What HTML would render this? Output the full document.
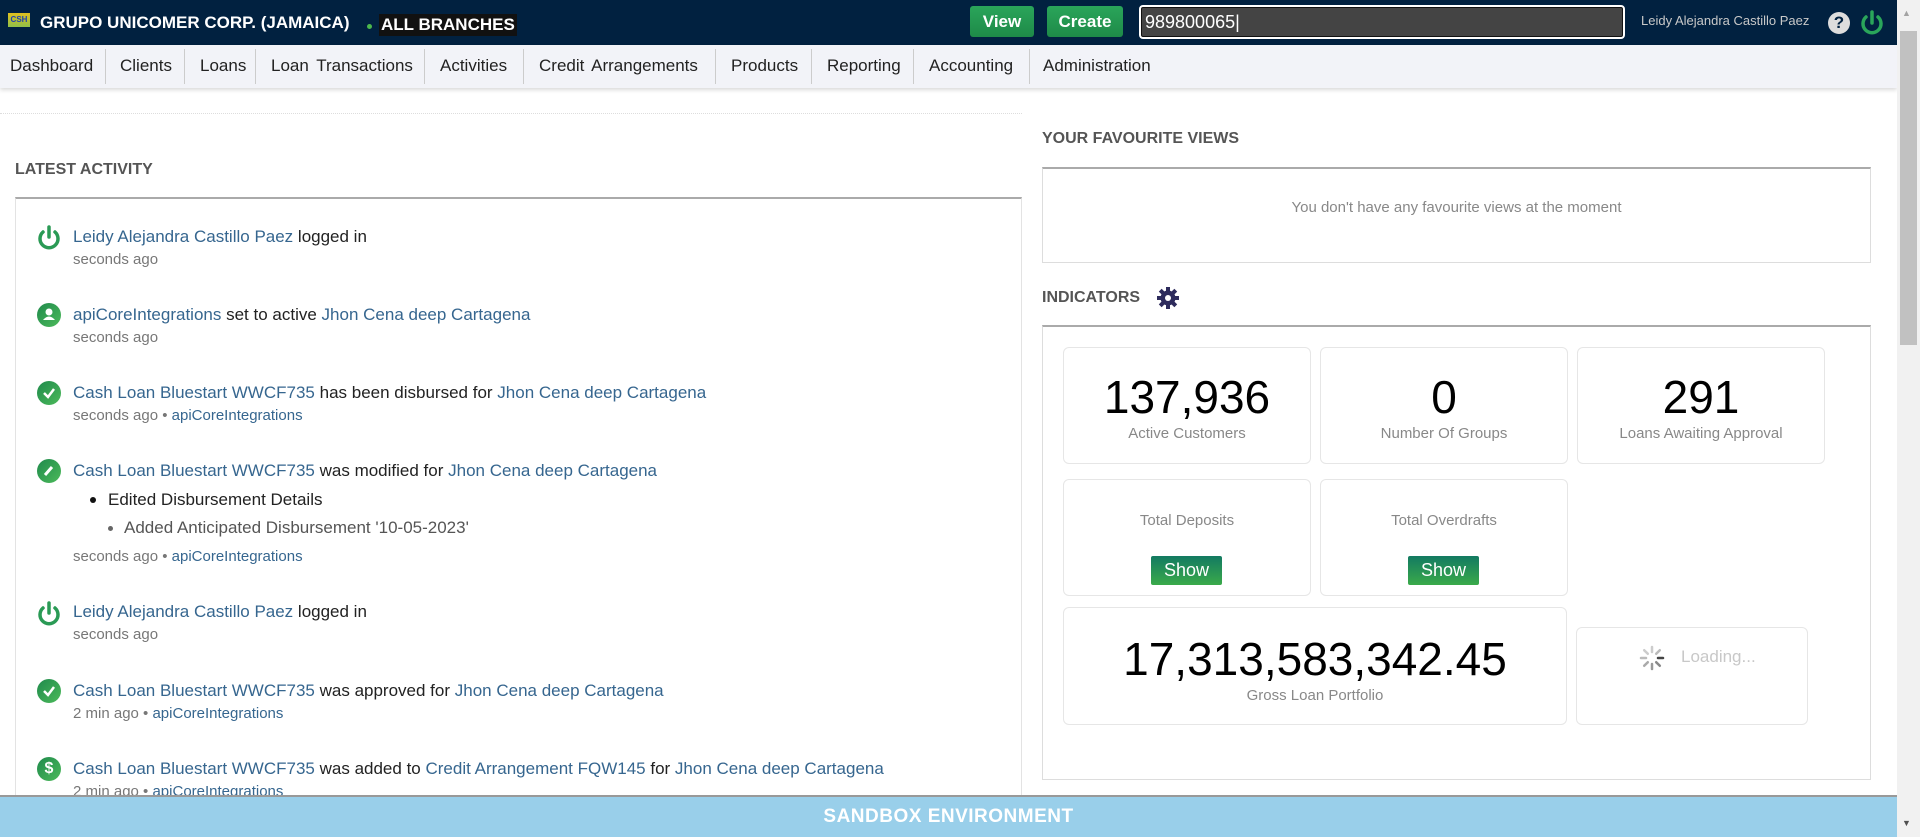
<!DOCTYPE html>
<html><head><meta charset="utf-8"><style>
*{margin:0;padding:0;box-sizing:border-box}
body{width:1920px;height:837px;overflow:hidden;position:relative;background:#fff;font-family:"Liberation Sans",sans-serif;color:#222}
.a{position:absolute;white-space:nowrap}
#hdr{position:absolute;left:0;top:0;width:1897px;height:45px;background:#012140}
#nav{position:absolute;left:0;top:45px;width:1897px;height:43px;background:#f2f3f8;box-shadow:0 2px 4px rgba(0,0,0,.15)}
.ni{position:absolute;top:11px;font-size:17px;color:#222}
.sep{position:absolute;top:4px;width:1px;height:35px;background:#ccc}
.btn{position:absolute;top:6px;height:31px;border-radius:3px;background:linear-gradient(#2aa55a,#1e8a48);color:#fff;font-weight:bold;font-size:17px;text-align:center;line-height:31px}
.lnk{color:#36668f}
.t{font-size:17px}
.s{font-size:15px;color:#777}
.ic{position:absolute;width:24px;height:24px;border-radius:50%;background:linear-gradient(135deg,#1f8a4c,#4cba5a)}
.card{position:absolute;border:1px solid #e6e6e6;border-radius:6px;background:#fff}
.num{position:absolute;left:0;right:0;text-align:center;font-size:46px;color:#000}
.lbl{position:absolute;left:0;right:0;text-align:center;font-size:15px;color:#888}
.show{position:absolute;width:71px;height:29px;left:50%;margin-left:-36px;background:linear-gradient(#137a62,#3aaa4a);color:#fff;font-size:18px;text-align:center;line-height:29px;border-radius:2px}
</style></head><body>
<div id="hdr">
 <div class="a" style="left:8px;top:13px;width:22px;height:14px;background:linear-gradient(#e0c020,#8fc04a);font-size:8px;color:#2244aa;font-weight:bold;line-height:14px;text-align:center">CSH</div>
 <div class="a" style="left:40px;top:13px;font-size:17px;font-weight:bold;color:#fff">GRUPO UNICOMER CORP. (JAMAICA)</div>
 <div class="a" style="left:367px;top:24px;width:5px;height:5px;border-radius:50%;background:#4cb84c"></div>
 <div class="a" style="left:379px;top:14px;height:22px;padding:0 2px;background:#111;font-size:17px;font-weight:bold;color:#fff;line-height:22px">ALL BRANCHES</div>
 <div class="btn" style="left:970px;width:64px">View</div>
 <div class="btn" style="left:1047px;width:76px">Create</div>
 <div class="a" style="left:1139px;top:5px;width:486px;height:34px;border:2px solid #fff;border-radius:4px;background:#444;box-shadow:inset 0 0 0 1px #111;color:#fff;font-size:18px;line-height:30px;padding-left:4px">989800065|</div>
 <div class="a" style="left:1641px;top:13px;font-size:13px;color:#c8c8c8">Leidy Alejandra Castillo Paez</div>
 <div class="a" style="left:1828px;top:12px;width:22px;height:22px;border-radius:50%;background:#ddd;color:#012140;font-weight:bold;font-size:17px;text-align:center;line-height:22px">?</div>
 <svg class="a" style="left:1859px;top:9px" width="26" height="28" viewBox="0 0 26 28"><path d="M7 8 A9 9 0 1 0 19 8" fill="none" stroke="#2aa55a" stroke-width="3.5" stroke-linecap="round"/><line x1="13" y1="3" x2="13" y2="14" stroke="#2aa55a" stroke-width="3.5" stroke-linecap="round"/></svg>
</div>
<div id="nav">
 <div class="ni" style="left:10px">Dashboard</div><div class="sep" style="left:105px"></div>
 <div class="ni" style="left:120px">Clients</div><div class="sep" style="left:184px"></div>
 <div class="ni" style="left:200px">Loans</div><div class="sep" style="left:255px"></div>
 <div class="ni" style="left:271px;word-spacing:3px">Loan Transactions</div><div class="sep" style="left:424px"></div>
 <div class="ni" style="left:440px">Activities</div><div class="sep" style="left:523px"></div>
 <div class="ni" style="left:539px;word-spacing:3px">Credit Arrangements</div><div class="sep" style="left:715px"></div>
 <div class="ni" style="left:731px">Products</div><div class="sep" style="left:811px"></div>
 <div class="ni" style="left:827px">Reporting</div><div class="sep" style="left:913px"></div>
 <div class="ni" style="left:929px">Accounting</div><div class="sep" style="left:1029px"></div>
 <div class="ni" style="left:1043px">Administration</div>
</div>
<div class="a" style="left:0;top:113px;width:1022px;border-top:1px dotted #ddd"></div>
<div class="a" style="left:1897px;top:0;width:23px;height:837px;background:#f1f1f1"></div>
<div class="a" style="left:1900px;top:31px;width:17px;height:314px;background:#c1c1c1"></div>
<div class="a" style="left:1902px;top:8px;font-size:9px;color:#a3a3a3">▲</div>
<div class="a" style="left:1902px;top:818px;font-size:9px;color:#505050">▼</div>

<div class="a" style="left:15px;top:161px;font-size:16px;font-weight:bold;color:#555">LATEST ACTIVITY</div>
<div class="a" style="left:15px;top:197px;width:1007px;height:640px;border-top:2px solid #aaa;border-left:1px solid #e3e3e3;border-right:1px solid #e3e3e3"></div>

<svg class="a" style="left:36px;top:224px" width="26" height="26" viewBox="0 0 26 26"><path d="M7 8 A9 9 0 1 0 19 8" fill="none" stroke="#2a9a55" stroke-width="3.5" stroke-linecap="round"/><line x1="13" y1="3" x2="13" y2="13" stroke="#2a9a55" stroke-width="3.5" stroke-linecap="round"/></svg>
<div class="a t" style="left:73px;top:227px"><span class="lnk">Leidy Alejandra Castillo Paez</span> logged in</div>
<div class="a s" style="left:73px;top:251px">seconds ago</div>

<div class="ic" style="left:37px;top:303px"><svg width="24" height="24"><circle cx="12" cy="9" r="3.5" fill="#fff"/><path d="M6 17 Q12 10 18 17Z" fill="#fff"/></svg></div>
<div class="a t" style="left:73px;top:305px"><span class="lnk">apiCoreIntegrations</span> set to active <span class="lnk">Jhon Cena deep Cartagena</span></div>
<div class="a s" style="left:73px;top:329px">seconds ago</div>

<div class="ic" style="left:37px;top:381px"><svg width="24" height="24"><path d="M7 12 L11 16 L17 8" fill="none" stroke="#fff" stroke-width="2.5"/></svg></div>
<div class="a t" style="left:73px;top:383px"><span class="lnk">Cash Loan Bluestart WWCF735</span> has been disbursed for <span class="lnk">Jhon Cena deep Cartagena</span></div>
<div class="a s" style="left:73px;top:407px">seconds ago • <span class="lnk">apiCoreIntegrations</span></div>

<div class="ic" style="left:37px;top:459px"><svg width="24" height="24"><path d="M8 16 L15 8" stroke="#fff" stroke-width="3"/></svg></div>
<div class="a t" style="left:73px;top:461px"><span class="lnk">Cash Loan Bluestart WWCF735</span> was modified for <span class="lnk">Jhon Cena deep Cartagena</span></div>
<div class="a" style="left:90px;top:497px;width:6px;height:6px;border-radius:50%;background:#111"></div>
<div class="a t" style="left:108px;top:490px">Edited Disbursement Details</div>
<div class="a" style="left:108px;top:526px;width:5px;height:5px;border-radius:50%;background:#666"></div>
<div class="a t" style="left:124px;top:518px;color:#555">Added Anticipated Disbursement '10-05-2023'</div>
<div class="a s" style="left:73px;top:548px">seconds ago • <span class="lnk">apiCoreIntegrations</span></div>

<svg class="a" style="left:36px;top:600px" width="26" height="26" viewBox="0 0 26 26"><path d="M7 8 A9 9 0 1 0 19 8" fill="none" stroke="#2a9a55" stroke-width="3.5" stroke-linecap="round"/><line x1="13" y1="3" x2="13" y2="13" stroke="#2a9a55" stroke-width="3.5" stroke-linecap="round"/></svg>
<div class="a t" style="left:73px;top:602px"><span class="lnk">Leidy Alejandra Castillo Paez</span> logged in</div>
<div class="a s" style="left:73px;top:626px">seconds ago</div>

<div class="ic" style="left:37px;top:679px"><svg width="24" height="24"><path d="M7 12 L11 16 L17 8" fill="none" stroke="#fff" stroke-width="2.5"/></svg></div>
<div class="a t" style="left:73px;top:681px"><span class="lnk">Cash Loan Bluestart WWCF735</span> was approved for <span class="lnk">Jhon Cena deep Cartagena</span></div>
<div class="a s" style="left:73px;top:705px">2 min ago • <span class="lnk">apiCoreIntegrations</span></div>

<div class="ic" style="left:37px;top:757px;color:#fff;font-weight:bold;font-size:16px;text-align:center;line-height:24px">$</div>
<div class="a t" style="left:73px;top:759px"><span class="lnk">Cash Loan Bluestart WWCF735</span> was added to <span class="lnk">Credit Arrangement FQW145</span> for <span class="lnk">Jhon Cena deep Cartagena</span></div>
<div class="a s" style="left:73px;top:783px">2 min ago • <span class="lnk">apiCoreIntegrations</span></div>

<div class="a" style="left:1042px;top:130px;font-size:16px;font-weight:bold;color:#555">YOUR FAVOURITE VIEWS</div>
<div class="a" style="left:1042px;top:167px;width:829px;height:96px;border:1px solid #ddd;border-top:2px solid #aaa"></div>
<div class="a" style="left:1042px;top:199px;width:829px;text-align:center;font-size:15px;color:#888">You don't have any favourite views at the moment</div>
<div class="a" style="left:1042px;top:289px;font-size:16px;font-weight:bold;color:#555">INDICATORS</div>
<svg class="a" style="left:1156px;top:286px" width="24" height="24" viewBox="0 0 24 24"><g fill="#2d2b5c"><circle cx="12" cy="12" r="7.5"/><rect x="10" y="1" width="4" height="22"/><rect x="1" y="10" width="22" height="4"/><rect x="10" y="1" width="4" height="22" transform="rotate(45 12 12)"/><rect x="10" y="1" width="4" height="22" transform="rotate(-45 12 12)"/></g><circle cx="12" cy="12" r="3" fill="#fff"/></svg>
<div class="a" style="left:1042px;top:325px;width:829px;height:455px;border:1px solid #ddd;border-top:2px solid #aaa"></div>

<div class="card" style="left:1063px;top:347px;width:248px;height:117px"><div class="num" style="top:22px">137,936</div><div class="lbl" style="top:77px">Active Customers</div></div>
<div class="card" style="left:1320px;top:347px;width:248px;height:117px"><div class="num" style="top:22px">0</div><div class="lbl" style="top:77px">Number Of Groups</div></div>
<div class="card" style="left:1577px;top:347px;width:248px;height:117px"><div class="num" style="top:22px">291</div><div class="lbl" style="top:77px">Loans Awaiting Approval</div></div>
<div class="card" style="left:1063px;top:479px;width:248px;height:117px"><div class="lbl" style="top:32px">Total Deposits</div><div class="show" style="top:76px">Show</div></div>
<div class="card" style="left:1320px;top:479px;width:248px;height:117px"><div class="lbl" style="top:32px">Total Overdrafts</div><div class="show" style="top:76px">Show</div></div>
<div class="card" style="left:1063px;top:607px;width:504px;height:118px"><div class="num" style="top:24px">17,313,583,342.45</div><div class="lbl" style="top:79px">Gross Loan Portfolio</div></div>
<div class="card" style="left:1576px;top:627px;width:232px;height:98px">
 <svg class="a" style="left:62px;top:17px" width="26" height="26" viewBox="0 0 26 26"><g stroke-width="2.5" stroke-linecap="round"><line x1="13" y1="2" x2="13" y2="7" stroke="#ccc"/><line x1="20.8" y1="5.2" x2="17.2" y2="8.8" stroke="#bbb"/><line x1="24" y1="13" x2="19" y2="13" stroke="#444"/><line x1="20.8" y1="20.8" x2="17.2" y2="17.2" stroke="#888"/><line x1="13" y1="24" x2="13" y2="19" stroke="#999"/><line x1="5.2" y1="20.8" x2="8.8" y2="17.2" stroke="#aaa"/><line x1="2" y1="13" x2="7" y2="13" stroke="#bbb"/><line x1="5.2" y1="5.2" x2="8.8" y2="8.8" stroke="#ccc"/></g></svg>
 <div class="a" style="left:104px;top:19px;font-size:17px;color:#c8c8c8">Loading...</div>
</div>

<div class="a" style="left:0;top:795px;width:1897px;height:42px;background:#99cfea;border-top:2px solid #999;text-align:center;color:#fff;font-weight:bold;font-size:19px;line-height:40px;letter-spacing:.5px">SANDBOX ENVIRONMENT</div>
</body></html>
